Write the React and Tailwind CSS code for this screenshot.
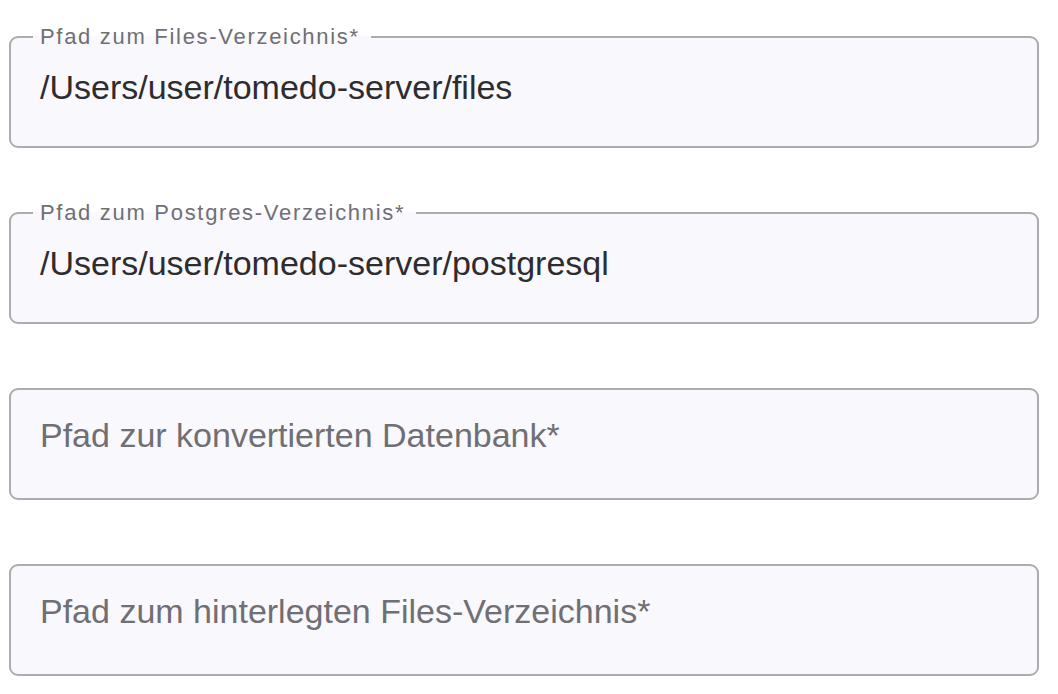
import React from "react";

const fields = [
  { label: "Pfad zum Files-Verzeichnis*", value: "/Users/user/tomedo-server/files" },
  { label: "Pfad zum Postgres-Verzeichnis*", value: "/Users/user/tomedo-server/postgresql" },
  { label: "Pfad zur konvertierten Datenbank*", value: "" },
  { label: "Pfad zum hinterlegten Files-Verzeichnis*", value: "" },
];

// outlined field: the legend makes the notch; empty fields keep a zero-width legend
function PathField({ label, value }) {
  const filled = value !== "";

  return (
    <fieldset className="rounded-[9px] border-2 border-[#acacb1] bg-[#f9f8fd] px-[22px]">
      {filled ? (
        <legend className="pl-[7px] pr-[11px] text-[22px] leading-[24px] tracking-[1.7px] text-[#6f6f74]">
          {label}
        </legend>
      ) : (
        <legend className="h-[24px] w-0 overflow-hidden p-0" />
      )}
      <div
        className={
          "h-[97px] pl-[7px] text-[34px] leading-[40px] " +
          (filled ? "pt-[18px] text-[#2d2d30]" : "pt-[14px] text-[#6f6f74]")
        }
      >
        {filled ? value : label}
      </div>
    </fieldset>
  );
}

export default function App() {
  return (
    <div
      className="min-h-screen w-full bg-white pl-[9px] pr-[19px] pt-[25px]"
      style={{ fontFamily: '"Liberation Sans", Arial, sans-serif' }}
    >
      <div className="flex flex-col gap-[53px]">
        {fields.map((f) => (
          <PathField key={f.label} label={f.label} value={f.value} />
        ))}
      </div>
    </div>
  );
}
